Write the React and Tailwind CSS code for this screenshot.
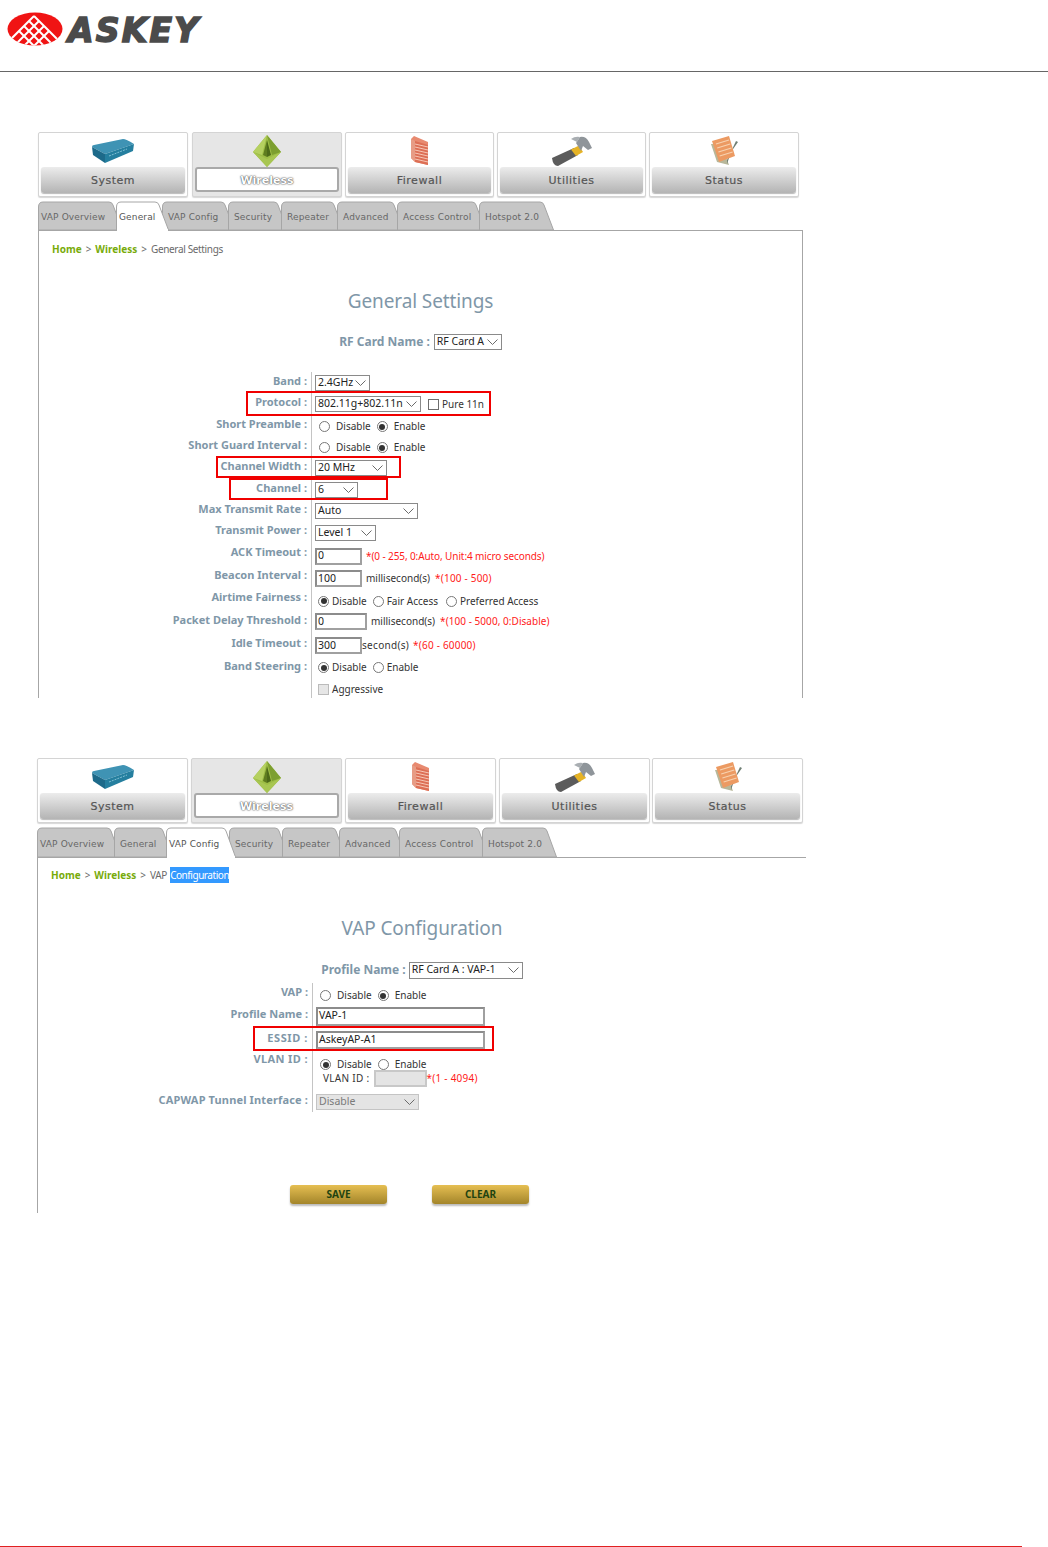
const FORM_RED = 'text-[#ff1a1a]';

function Logo() {
  const rows = [0, 1, 2, 3];
  return (
    <div className="flex items-start">
      <svg width="56" height="34" viewBox="0 0 56 34" className="shrink-0">
        <defs>
          <clipPath id="logoClip">
            <ellipse cx="28" cy="17" rx="27.5" ry="16.5" />
          </clipPath>
        </defs>
        <ellipse cx="28" cy="17" rx="27.5" ry="16.5" fill="#f01414" />
        <g clipPath="url(#logoClip)" stroke="#fff" strokeWidth="2">
          {rows.map((i) => (
            <line key={'a' + i} x1={27 + i * 5} y1={4 + i * 5} x2={27 + i * 5 - 34} y2={4 + i * 5 + 34} />
          ))}
          {rows.map((i) => (
            <line key={'b' + i} x1={27 - i * 5} y1={4 + i * 5} x2={27 - i * 5 + 34} y2={4 + i * 5 + 34} />
          ))}
        </g>
      </svg>
      <span className="ml-[5px] mt-[2px] font-['DejaVu_Sans',sans-serif] font-bold italic text-[33px] leading-[34px] tracking-[2.2px] text-[#4b4b4b] [-webkit-text-stroke:1.6px_#4b4b4b]">
        ASKEY
      </span>
    </div>
  );
}

function DeviceIcon() {
  return (
    <svg width="44" height="26" viewBox="0 0 44 26">
      <path d="M1 9 Q1 7 3 7 L32 1 Q35 1 43 6 L14 16 Z" fill="#3f93b4" />
      <path d="M1 9 L14 16 L14 25 L2 17 Z" fill="#1d6a8a" />
      <path d="M14 16 L43 6 L42 13 L14 25 Z" fill="#257f9f" />
      <path d="M18 18 L36 11" stroke="#7fc0d4" strokeWidth="1" strokeDasharray="2 1" />
    </svg>
  );
}

function PyramidIcon() {
  return (
    <svg width="30" height="33" viewBox="0 0 30 33">
      <path d="M15 0 L29 17 L15 32 L1 17 Z" fill="#9dbd45" />
      <path d="M15 0 L1 17 L10 20 Z" fill="#b5d060" />
      <path d="M15 0 L29 17 L20 20 Z" fill="#7d9f30" />
      <path d="M15 5 L11 20 L15 22 Z" fill="#5f7d1f" />
      <path d="M15 5 L19 20 L15 22 Z" fill="#4d6a18" />
      <path d="M1 17 L15 32 L29 17 L15 24 Z" fill="#a8c652" />
    </svg>
  );
}

function FirewallIcon() {
  return (
    <svg width="19" height="30" viewBox="0 0 19 30">
      <path d="M1 3 L4 0 L18 6 L18 29 L5 26 L1 22 Z" fill="#e88a70" />
      <path d="M5 5 L18 9 L18 29 L5 26 Z" fill="#dd6f55" />
      {[8, 11, 14, 17, 20, 23].map((y) => (
        <line key={y} x1="5" y1={y} x2="18" y2={y + 3} stroke="#f6c6b5" strokeWidth="1" />
      ))}
      <path d="M1 3 L5 5 L5 26 L1 22 Z" fill="#e79c85" />
    </svg>
  );
}

function HammerIcon() {
  return (
    <svg width="42" height="31" viewBox="0 0 42 31">
      <path d="M1 22 L23 12 L27 19 L7 30 Q2 30 1 22 Z" fill="#5b5b5b" />
      <path d="M20 13.5 L28 9.5 L32 16 L25 20 Z" fill="#e6b325" />
      <path d="M25 7 L29 1 Q35 0 38 6 L41 12 L37 14 L32 10 L30 15 Z" fill="#8f959a" />
      <path d="M29 1 Q24 0 20 3 L26 6 Z" fill="#a9aeb2" />
    </svg>
  );
}

function NotesIcon() {
  return (
    <svg width="30" height="30" viewBox="0 0 30 30">
      <path d="M2 8 L8 26 L20 29 L12 8 Z" fill="#b7b79a" />
      <path d="M22 16 L29 6 L27 5 L18 24 L18 28 Z" fill="#6f7f74" />
      <path d="M3 5 L20 0 L26 20 L10 26 Z" fill="#ec9a62" />
      {[0, 1, 2, 3].map((i) => (
        <line key={i} x1={7 + i * 1.2} y1={8 + i * 4} x2={20 + i * 1.2} y2={4 + i * 4} stroke="#f7d2b0" strokeWidth="1.2" />
      ))}
    </svg>
  );
}

const NAV = [
  { label: 'System', icon: <DeviceIcon /> },
  { label: 'Wireless', icon: <PyramidIcon />, active: true },
  { label: 'Firewall', icon: <FirewallIcon /> },
  { label: 'Utilities', icon: <HammerIcon /> },
  { label: 'Status', icon: <NotesIcon /> },
];

function NavBar({ widths, gaps }) {
  return (
    <div className="flex">
      {NAV.map((n, i) => (
        <div
          key={n.label}
          style={{ width: widths[i], marginLeft: gaps[i] }}
          className={`h-[65px] shrink-0 flex flex-col rounded-[2px] border border-[#d4d4d4] shadow-[0_1px_1px_#d8d8d8] p-[2px] ${n.active ? 'bg-[#e6e6e6]' : 'bg-white'}`}
        >
          <div className="h-[32px] flex items-center justify-center">{n.icon}</div>
          {n.active ? (
            <div className="h-[25px] pt-[3px] flex items-center justify-center rounded-[3px] border-2 border-[#a9a9a9] bg-white font-['DejaVu_Sans',sans-serif] font-bold text-[11px] text-white [text-shadow:0_0_2px_#444,0_0_1px_#444]">
              {n.label}
            </div>
          ) : (
            <div className="h-[26px] pt-[3px] flex items-center justify-center rounded-[3px] bg-gradient-to-b from-[#ececec] to-[#b4b4b4] shadow-[0_1px_1px_#bbb] font-['DejaVu_Sans',sans-serif] text-[11px] tracking-[0.5px] text-[#555] [-webkit-text-stroke:0.2px_#555]">
              {n.label}
            </div>
          )}
        </div>
      ))}
    </div>
  );
}

function Tab({ label, width, height, active, first }) {
  const w = width + 7;
  const d = `M0.5 ${height} V6 Q0.5 1 5 1 H${width - 7} Q${width - 4} 1 ${width - 3} 4 L${w - 0.5} ${height}`;
  const left = first || active ? 3 : 6;
  return (
    <div style={{ width, height }} className={`relative shrink-0 ${active ? 'z-10' : ''}`}>
      <svg width={w} height={height + 1} className="absolute left-0 top-0 overflow-visible">
        <path d={d + (active ? '' : ' Z')} fill={active ? '#fff' : '#c6c6c6'} stroke="#a6a6a6" strokeWidth="1" />
        {active && <rect x="1" y={height - 1} width={w - 2} height="2.5" fill="#fff" />}
      </svg>
      <span
        style={{ left, top: height - 20 }}
        className={`absolute whitespace-nowrap font-['DejaVu_Sans',sans-serif] text-[9px] leading-[14px] tracking-[0.15px] ${active ? 'text-[#555]' : 'text-[#666]'}`}
      >
        {label}
      </span>
    </div>
  );
}

function TabBar({ tabs, height, activeLabel }) {
  return (
    <div className="relative z-10 flex">
      {tabs.map(([label, width], i) => (
        <Tab key={label} label={label} width={width} height={height} active={label === activeLabel} first={i === 0} />
      ))}
    </div>
  );
}

function Chevron() {
  return (
    <svg width="11" height="6" viewBox="0 0 11 6" className="shrink-0">
      <path d="M0.5 0.5 L5.5 5.5 L10.5 0.5" fill="none" stroke="#6b6b6b" strokeWidth="1" />
    </svg>
  );
}

function Select({ value, width, disabled, height = 16 }) {
  return (
    <div
      style={{ width, height }}
      className={`shrink-0 flex items-center justify-between pl-[2px] pr-[3px] border border-[#8a8a8a] text-[10.5px] ${disabled ? 'bg-[#e4e4e4] border-[#c4c4c4] text-[#7a7a7a]' : 'bg-white text-[#222]'}`}
    >
      <span className="whitespace-nowrap">{value}</span>
      <Chevron />
    </div>
  );
}

function Input({ value, width, disabled, height = 17 }) {
  return (
    <div
      style={{ width, height }}
      className={`shrink-0 flex items-center pl-[1px] border-2 text-[10.5px] text-[#222] ${disabled ? 'bg-[#e4e4e4] border-[#c8c8c8]' : 'bg-white border-[#8c8c8c] border-r-[#a0a0a0] border-b-[#a0a0a0]'}`}
    >
      {value}
    </div>
  );
}

function Radio({ checked }) {
  return (
    <span className="shrink-0 w-[11px] h-[11px] rounded-full border border-[#777] bg-white flex items-center justify-center">
      {checked && <span className="w-[6px] h-[6px] rounded-full bg-[#333]" />}
    </span>
  );
}

function Check({ disabled }) {
  return <span className={`block shrink-0 w-[11px] h-[11px] border ${disabled ? 'border-[#bbb] bg-[#e6e6e6]' : 'border-[#6e6e6e] bg-white'}`} />;
}

function Txt({ children, className = '' }) {
  return <span className={`whitespace-nowrap text-[10px] text-[#333] ${className}`}>{children}</span>;
}

function Note({ children }) {
  return <span className={`whitespace-nowrap text-[10px] tracking-[-0.1px] ${FORM_RED}`}>{children}</span>;
}

function Row({ label, height, labelWidth, pad = 3, drop = 0, labelClass = '', children }) {
  return (
    <div style={{ height }} className="flex">
      <div
        style={{ width: labelWidth }}
        className={`shrink-0 flex items-center justify-end pb-[3px] whitespace-nowrap text-[11px] font-bold text-[#7f97a8] ${labelClass}`}
      >
        {label}
      </div>
      <div style={{ paddingLeft: pad, paddingTop: drop }} className="ml-[4px] border-l border-[#c4c4c4] flex items-center">
        {children}
      </div>
    </div>
  );
}

function Crumb({ children }) {
  return (
    <div className="h-[16px] flex items-center whitespace-nowrap text-[10px] leading-[16px] text-[#6a6a6a]">
      <span className="font-bold text-[#78ab0a]">Home</span>
      <span className="mx-[4px]">&gt;</span>
      <span className="font-bold text-[#78ab0a]">Wireless</span>
      <span className="mx-[4px]">&gt;</span>
      {children}
    </div>
  );
}

function RedBox({ className }) {
  return <div className={`absolute border-2 border-[#f00000] ${className}`} />;
}

const TABS_A = [
  ['VAP Overview', 78], ['General', 46], ['VAP Config', 66], ['Security', 53], ['Repeater', 56],
  ['Advanced', 60], ['Access Control', 82], ['Hotspot 2.0', 68],
];
const TABS_B = [
  ['VAP Overview', 77], ['General', 52], ['VAP Config', 63], ['Security', 53], ['Repeater', 57],
  ['Advanced', 60], ['Access Control', 83], ['Hotspot 2.0', 68],
];

function GeneralSettings() {
  const lw = 268;
  return (
    <section className="ml-[38px] mt-[60px] w-[765px]">
      <NavBar widths={[150, 150, 149, 149, 150]} gaps={[0, 4, 3, 3, 3]} />
      <div className="mt-[4px]">
        <TabBar tabs={TABS_A} height={29} activeLabel="General" />
      </div>
      <div className="h-[468px] border border-b-0 border-[#a6a6a6] overflow-hidden">
        <div className="pt-[10px] pl-[13px]">
          <Crumb><span className="tracking-[-0.35px]">General Settings</span></Crumb>
        </div>
        <h1 className="mt-[30px] text-center text-[19px] tracking-[-0.1px] leading-[28px] text-[#7f97a8]">General Settings</h1>
        <div className="mt-[18px] h-[18px] flex items-center justify-center gap-[4px]">
          <span className="text-[12px] font-bold text-[#7f97a8]">RF Card Name :</span>
          <Select value="RF Card A" width={68} />
        </div>
        <div className="relative mt-[21px]">
          <Row label="Band :" height={21} labelWidth={lw}>
            <Select value="2.4GHz" width={55} />
          </Row>
          <Row label="Protocol :" height={22} labelWidth={lw}>
            <Select value="802.11g+802.11n" width={106} />
            <span className="ml-[7px]"><Check /></span>
            <Txt className="ml-[3px]">Pure 11n</Txt>
          </Row>
          <Row label="Short Preamble :" height={21} labelWidth={lw} pad={7} drop={2}>
            <Radio /><Txt className="ml-[6px]">Disable</Txt>
            <span className="ml-[6px]"><Radio checked /></span><Txt className="ml-[6px]">Enable</Txt>
          </Row>
          <Row label="Short Guard Interval :" height={21} labelWidth={lw} pad={7} drop={2}>
            <Radio /><Txt className="ml-[6px]">Disable</Txt>
            <span className="ml-[6px]"><Radio checked /></span><Txt className="ml-[6px]">Enable</Txt>
          </Row>
          <Row label="Channel Width :" height={22} labelWidth={lw}>
            <Select value="20 MHz" width={72} />
          </Row>
          <Row label="Channel :" height={21} labelWidth={lw}>
            <Select value="6" width={43} />
          </Row>
          <Row label="Max Transmit Rate :" height={21} labelWidth={lw}>
            <Select value="Auto" width={103} />
          </Row>
          <Row label="Transmit Power :" height={22} labelWidth={lw} drop={2}>
            <Select value="Level 1" width={61} />
          </Row>
          <Row label="ACK Timeout :" height={22} labelWidth={lw} drop={4}>
            <Input value="0" width={47} />
            <Note><span className="ml-[4px]">*(0 - 255, 0:Auto, Unit:4 micro seconds)</span></Note>
          </Row>
          <Row label="Beacon Interval :" height={23} labelWidth={lw} drop={4}>
            <Input value="100" width={47} />
            <Txt className="ml-[4px]">millisecond(s)</Txt>
            <Note><span className="ml-[5px] tracking-[0.2px]">*(100 - 500)</span></Note>
          </Row>
          <Row label="Airtime Fairness :" height={22} labelWidth={lw} pad={6} drop={4}>
            <Radio checked /><Txt className="ml-[3px]">Disable</Txt>
            <span className="ml-[6px]"><Radio /></span><Txt className="ml-[3px]">Fair Access</Txt>
            <span className="ml-[8px]"><Radio /></span><Txt className="ml-[3px]">Preferred Access</Txt>
          </Row>
          <Row label="Packet Delay Threshold :" height={23} labelWidth={lw}>
            <Input value="0" width={52} />
            <Txt className="ml-[4px]">millisecond(s)</Txt>
            <Note><span className="ml-[5px] tracking-[0.05px]">*(100 - 5000, 0:Disable)</span></Note>
          </Row>
          <Row label="Idle Timeout :" height={23} labelWidth={lw} drop={2}>
            <Input value="300" width={47} />
            <Txt className="tracking-[0.3px]">second(s)</Txt>
            <Note><span className="ml-[4px] tracking-[0.2px]">*(60 - 60000)</span></Note>
          </Row>
          <Row label="Band Steering :" height={23} labelWidth={lw} pad={6}>
            <Radio checked /><Txt className="ml-[3px]">Disable</Txt>
            <span className="ml-[6px]"><Radio /></span><Txt className="ml-[3px]">Enable</Txt>
          </Row>
          <Row label="" height={19} labelWidth={lw} pad={6} drop={2}>
            <Check disabled /><Txt className="ml-[3px]">Aggressive</Txt>
          </Row>
          <RedBox className="left-[207px] top-[19px] w-[245px] h-[25px]" />
          <RedBox className="left-[177px] top-[84px] w-[185px] h-[22px]" />
          <RedBox className="left-[190px] top-[106px] w-[159px] h-[22px]" />
        </div>
      </div>
    </section>
  );
}

function VapConfig() {
  const lw = 270;
  return (
    <section className="ml-[37px] mt-[60px] w-[769px]">
      <NavBar widths={[151, 151, 151, 151, 151]} gaps={[0, 3, 3, 3, 2]} />
      <div className="mt-[4px]">
        <TabBar tabs={TABS_B} height={30} activeLabel="VAP Config" />
      </div>
      <div className="h-[356px] border-l border-t border-[#a6a6a6]">
        <div className="pt-[9px] pl-[13px]">
          <Crumb>
            <span className="tracking-[-0.3px]">VAP</span>
            <span className="ml-[3px] bg-[#3399ff] text-white tracking-[-0.45px]">Configuration</span>
          </Crumb>
        </div>
        <h1 className="mt-[31px] text-center text-[19px] tracking-[-0.1px] leading-[28px] text-[#7f97a8]">VAP Configuration</h1>
        <div className="mt-[19px] h-[18px] flex items-center justify-center gap-[3px]">
          <span className="text-[12px] font-bold text-[#7f97a8]">Profile Name :</span>
          <Select value="RF Card A : VAP-1" width={114} height={17} />
        </div>
        <div className="relative mt-[4px]">
          <Row label="VAP :" height={21} labelWidth={lw} pad={7} drop={4}>
            <Radio /><Txt className="ml-[6px]">Disable</Txt>
            <span className="ml-[6px]"><Radio checked /></span><Txt className="ml-[6px]">Enable</Txt>
          </Row>
          <Row label="Profile Name :" height={23} labelWidth={lw} drop={1}>
            <Input value="VAP-1" width={169} height={19} />
          </Row>
          <Row label="ESSID :" height={25} labelWidth={lw} drop={1} labelClass="tracking-[0.6px]">
            <Input value="AskeyAP-A1" width={169} height={18} />
          </Row>
          <Row label="VLAN ID :" height={18} labelWidth={lw} pad={7} labelClass="tracking-[0.4px]">
            <div className="pt-[7px] flex items-center">
              <Radio checked /><Txt className="ml-[6px]">Disable</Txt>
              <span className="ml-[6px]"><Radio /></span><Txt className="ml-[6px]">Enable</Txt>
            </div>
          </Row>
          <div className="h-[21px] flex">
            <div className="w-[270px] shrink-0" />
            <div className="ml-[4px] pl-[10px] border-l border-[#c4c4c4] flex items-start">
              <Txt className="leading-[17px] tracking-[0.3px]">VLAN ID :</Txt>
              <span className="ml-[4px]"><Input value="" width={53} disabled /></span>
              <Note><span className="leading-[17px] tracking-[0.25px]">*(1 - 4094)</span></Note>
            </div>
          </div>
          <Row label="CAPWAP Tunnel Interface :" height={21} labelWidth={lw} labelClass="tracking-[0.15px]">
            <Select value="Disable" width={103} disabled />
          </Row>
          <RedBox className="left-[215px] top-[43px] w-[241px] h-[25px]" />
        </div>
        <div className="mt-[73px] pl-[252px] flex gap-[45px]">
          {['SAVE', 'CLEAR'].map((b) => (
            <div
              key={b}
              className="w-[97px] h-[19px] flex items-center justify-center rounded-[3px] bg-gradient-to-b from-[#e6bf52] to-[#a3852a] shadow-[0_2px_2px_#bbb] text-[10px] font-bold text-[#1f4310]"
            >
              {b}
            </div>
          ))}
        </div>
      </div>
    </section>
  );
}

export default function App() {
  return (
    <div className="w-[1048px] h-[1547px] bg-white flex flex-col overflow-hidden font-['Noto_Sans',sans-serif]">
      <header className="h-[72px] shrink-0 border-b border-[#666] pl-[7px] pt-[12px]">
        <Logo />
      </header>
      <GeneralSettings />
      <VapConfig />
      <div className="mt-auto mr-[26px] h-[1px] bg-[#e02020]" />
    </div>
  );
}
